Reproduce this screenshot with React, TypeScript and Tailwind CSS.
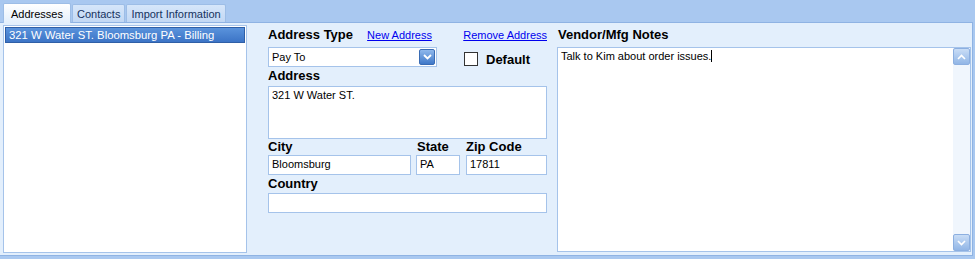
import React from "react";

const font = { fontFamily: '"Liberation Sans", Arial, sans-serif' };

function Label({ children, className = "" }: { children: React.ReactNode; className?: string }) {
    return <div className={`text-[13px] font-bold leading-[13px] text-black whitespace-nowrap ${className}`}>{children}</div>;
}

function Field({ value, className = "" }: { value?: string; className?: string }) {
    return (
        <div className={`h-[20px] bg-white border border-[#a5c3ea] px-[3px] text-[11px] leading-[17px] text-black ${className}`}>
            {value}
        </div>
    );
}

function Tab({ label, active }: { label: string; active?: boolean }) {
    if (active) {
        return (
            <div className="h-[20px] px-[7px] pt-[3px] text-[11px] leading-[14px] text-black bg-gradient-to-b from-white to-[#e3effc] border border-b-0 border-[#9dbde6] rounded-t-[2px] -mb-px relative z-10 whitespace-nowrap">
                {label}
            </div>
        );
    }
    return (
        <div className="h-[18px] px-[4px] pt-[2px] text-[11px] leading-[14px] text-[#15325e] bg-gradient-to-b from-[#d6e6fa] to-[#c2d8f4] border border-b-0 border-[#9dbde6] rounded-t-[2px] whitespace-nowrap">
            {label}
        </div>
    );
}

export default function App() {
    return (
        <div className="w-[975px] h-[259px] bg-[#a9c8f0] flex flex-col overflow-hidden" style={font}>
            {/* Tabs */}
            <div className="h-[22px] flex items-end pl-[3px] gap-[1px]">
                <Tab label="Addresses" active />
                <Tab label="Contacts" />
                <Tab label="Import Information" />
            </div>

            {/* Panel */}
            <div className="w-[973px] h-[234px] bg-[#e3effc] border-t border-r border-b border-[#8fb3e3] flex">
                {/* Address list */}
                <div className="ml-[3px] mt-[2px] w-[244px] h-[228px] bg-white border border-[#a5c3ea] p-[1px]">
                    <div className="h-[16px] bg-gradient-to-b from-[#5a93dc] to-[#3c74c6] border border-[#2f5fa6] px-[3px] text-[11.3px] leading-[14px] text-white whitespace-nowrap">
                        321 W Water ST. Bloomsburg PA - Billing
                    </div>
                </div>

                {/* Address form */}
                <div className="ml-[21px] w-[279px] flex flex-col">
                    <div className="mt-[5px] h-[14px] flex items-start">
                        <Label className="w-[100px]">Address Type</Label>
                        <span className="text-[11px] leading-[13px] text-[#0000ee] underline mt-[1px] w-[97px] whitespace-nowrap">New Address</span>
                        <span className="text-[11px] leading-[13px] text-[#0000ee] underline mt-[1px] whitespace-nowrap">Remove Address</span>
                    </div>
                    <div className="mt-[5px] flex items-start">
                        <div className="w-[169px] h-[20px] bg-white border border-[#a5c3ea] flex items-center pl-[3px] pr-[1px]">
                            <span className="flex-1 text-[11px] text-black">Pay To</span>
                            <div className="w-[16px] h-[16px] rounded-[2px] bg-gradient-to-b from-[#8fb8ec] to-[#3f78c8] border border-[#3a6cb4] flex items-center justify-center">
                                <svg width="9" height="6" viewBox="0 0 9 6">
                                    <path d="M1 1 L4.5 4.5 L8 1" stroke="white" strokeWidth="1.8" fill="none" />
                                </svg>
                            </div>
                        </div>
                        <div className="ml-[27px] mt-[5px] w-[14px] h-[14px] bg-white border border-[#333]" />
                        <Label className="ml-[8px] mt-[6px]">Default</Label>
                    </div>
                    <Label className="mt-[2px]">Address</Label>
                    <div className="mt-[4px] h-[53px] bg-white border border-[#a5c3ea] px-[3px] pt-[2px] text-[11px] leading-[13px] text-black">
                        321 W Water ST.
                    </div>
                    <div className="mt-[1px] flex">
                        <Label className="w-[149px]">City</Label>
                        <Label className="w-[49px]">State</Label>
                        <Label>Zip Code</Label>
                    </div>
                    <div className="mt-[2px] flex">
                        <Field value="Bloomsburg" className="w-[143px]" />
                        <Field value="PA" className="w-[44px] ml-[5px]" />
                        <Field value="17811" className="w-[81px] ml-[6px]" />
                    </div>
                    <Label className="mt-[2px]">Country</Label>
                    <Field className="mt-[3px] w-[279px]" />
                </div>

                {/* Notes */}
                <div className="ml-[10px] flex flex-col">
                    <Label className="mt-[5px] ml-[1px]">Vendor/Mfg Notes</Label>
                    <div className="mt-[6px] w-[414px] h-[205px] bg-white border border-[#a5c3ea] flex">
                        <div className="flex-1 px-[3px] pt-[2px] text-[11px] leading-[13px] text-black">
                            Talk to Kim about order issues.<span className="inline-block w-px h-[12px] bg-black align-[-2px]" />
                        </div>
                        <div className="w-[17px] bg-[#f0f6fd] flex flex-col justify-between">
                            <div className="h-[17px] rounded-[2px] bg-gradient-to-b from-[#c9ddf6] to-[#92b6e6] border border-[#8cafe0] flex items-center justify-center">
                                <svg width="9" height="6" viewBox="0 0 9 6">
                                    <path d="M1 5 L4.5 1.5 L8 5" stroke="white" strokeWidth="1.6" fill="none" />
                                </svg>
                            </div>
                            <div className="h-[17px] rounded-[2px] bg-gradient-to-b from-[#c9ddf6] to-[#92b6e6] border border-[#8cafe0] flex items-center justify-center">
                                <svg width="9" height="6" viewBox="0 0 9 6">
                                    <path d="M1 1 L4.5 4.5 L8 1" stroke="white" strokeWidth="1.6" fill="none" />
                                </svg>
                            </div>
                        </div>
                    </div>
                </div>
            </div>
        </div>
    );
}
